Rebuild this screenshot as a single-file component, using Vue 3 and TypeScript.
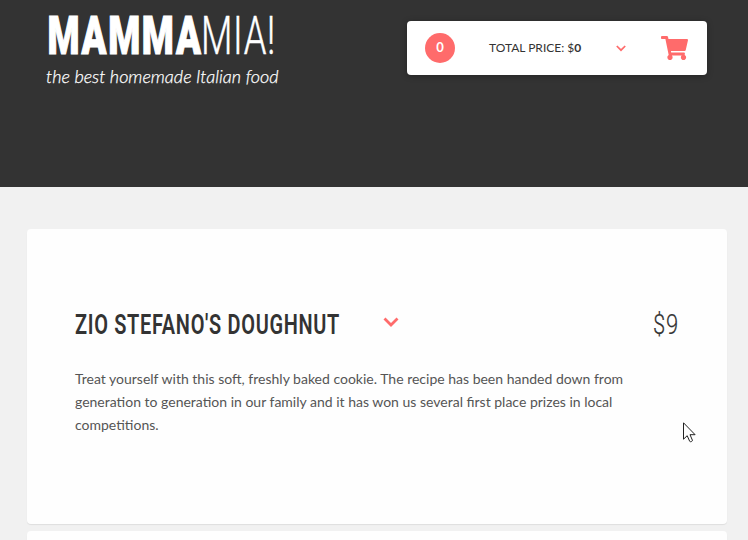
<script setup lang="ts">
import { ref } from 'vue'

interface Dish {
  name: string
  price: number
  description: string
}

const count = ref<number>(0)
const total = ref<number>(0)
const dish: Dish = {
  name: "ZIO STEFANO'S DOUGHNUT",
  price: 9,
  description:
    'Treat yourself with this soft, freshly baked cookie. The recipe has been handed down from generation to generation in our family and it has won us several first place prizes in local competitions.',
}
</script>

<template>
  <div class="page">
    <header class="header">
      <div class="brand">
        <svg class="logo" width="240" height="70" viewBox="0 0 240 70">
          <text class="logo-bold" x="1.500" y="53.500" textLength="155" lengthAdjust="spacingAndGlyphs">MAMMA</text>
          <text class="logo-thin" x="155" y="54" textLength="75" lengthAdjust="spacingAndGlyphs">MIA!</text>
        </svg>
        <p class="tagline">the best homemade Italian food</p>
      </div>
      <div class="cart">
        <span class="badge">{{ count }}</span>
        <span class="total">TOTAL PRICE: $<b>{{ total }}</b></span>
        <svg class="cart-chevron" width="10" height="7" viewBox="0 0 10 7">
          <path d="M.8 1 5 5.2 9.2 1" />
        </svg>
        <svg class="cart-icon" width="27" height="24" viewBox="0 0 576 512">
          <path
            d="M528.12 301.319l47.273-208C578.806 78.301 567.391 64 551.99 64H159.208l-9.166-44.81C147.758 8.021 137.93 0 126.529 0H24C10.745 0 0 10.745 0 24v16c0 13.255 10.745 24 24 24h69.883l70.248 343.435C147.325 417.1 136 435.222 136 456c0 30.928 25.072 56 56 56s56-25.072 56-56c0-15.674-6.447-29.835-16.824-40h209.647C430.447 426.165 424 440.326 424 456c0 30.928 25.072 56 56 56s56-25.072 56-56c0-22.172-12.888-41.332-31.579-50.405l5.517-24.276c3.413-15.018-8.002-29.319-23.403-29.319H218.117l-6.545-32h293.145c11.206 0 20.92-7.754 23.403-18.681z"
          />
        </svg>
      </div>
    </header>

    <main class="menu">
      <article class="card">
        <div class="card-head">
          <svg class="title" width="268" height="40" viewBox="0 0 268 40">
            <text x="0" y="30.500" textLength="265" lengthAdjust="spacingAndGlyphs">{{ dish.name }}</text>
          </svg>
          <svg class="chevron" width="16" height="10" viewBox="0 0 16 10">
            <path d="M1.500 1.500 8 8l6.500-6.500" />
          </svg>
          <svg class="price" width="26" height="40" viewBox="0 0 26 40">
            <text x="0" y="30.500" textLength="26" lengthAdjust="spacingAndGlyphs">${{ dish.price }}</text>
          </svg>
        </div>
        <p class="description">{{ dish.description }}</p>
      </article>
      <article class="card"></article>
    </main>

    <svg class="pointer" width="13" height="21" viewBox="0 0 13 21">
      <path d="M.5.8v16.400l3.700-3.500 2.500 5.600c.8 1 3 .1 2.700-1.100L7 12.700h5.100z" />
    </svg>
  </div>
</template>

<style>
body {
  margin: 0;
  overflow: hidden;
}
</style>

<style scoped>
.page {
  position: relative;
  height: 540px;
  overflow: hidden;
  background: #f1f1f1;
  color: #333;
  font-family: Lato, "Liberation Sans", sans-serif;
}
.header {
  box-sizing: border-box;
  height: 187px;
  padding: 0 41px 0 46px;
  display: flex;
  justify-content: space-between;
  align-items: flex-start;
  background: #333;
}
.logo,
.title,
.price {
  display: block;
  overflow: visible;
}
.logo text {
  fill: #fff;
  stroke: #fff;
  font-family: Roboto, sans-serif;
}
.logo .logo-bold {
  font-size: 53.5px;
  font-weight: 900;
  letter-spacing: 2.5px;
  stroke-width: 1.2;
}
.logo .logo-thin {
  font-size: 54.5px;
  font-weight: 300;
  letter-spacing: 1px;
  stroke-width: 0.5;
}
.tagline {
  margin: -6px 0 0;
  color: #fff;
  font-size: 18px;
  font-weight: 300;
  line-height: 24px;
  font-style: italic;
  white-space: nowrap;
  -webkit-text-stroke: 0.25px #fff;
}
.cart {
  box-sizing: border-box;
  width: 300px;
  height: 54px;
  margin-top: 21px;
  padding: 0 19px 0 18px;
  display: flex;
  align-items: center;
  border-radius: 4px;
  background: #fff;
  box-shadow: 0 1px 6px rgba(0, 0, 0, 0.3);
}
.badge {
  width: 30px;
  height: 30px;
  border-radius: 50%;
  background: #ff6b6b;
  color: #fff;
  font-size: 13px;
  font-weight: 700;
  line-height: 28px;
  text-align: center;
}
.total {
  width: 93px;
  margin-left: 34px;
  padding-bottom: 2px;
  font-size: 12px;
  white-space: nowrap;
}
.cart-chevron {
  margin-left: 34px;
}
.cart-chevron path,
.chevron path {
  fill: none;
  stroke: #ff6b6b;
  stroke-width: 1.7;
}
.cart-icon {
  margin-left: auto;
  fill: #ff6b6b;
}
.menu {
  padding: 42px 21px 0 27px;
  display: flex;
  flex-direction: column;
  gap: 7px;
}
.card {
  box-sizing: border-box;
  height: 295px;
  flex: none;
  padding: 74px 48px 0;
  border-radius: 4px;
  background: #fefefe;
  box-shadow: 0 1px 1px rgba(0, 0, 0, 0.08);
}
.card-head {
  display: flex;
  align-items: center;
  height: 40px;
}
.title text {
  fill: #333;
  font-family: Roboto, sans-serif;
  font-size: 28.5px;
  font-weight: 600;
  letter-spacing: 1px;
}
.chevron {
  margin-left: 40px;
  margin-bottom: 2px;
}
.chevron path {
  stroke-width: 2.8;
}
.price {
  margin-left: auto;
}
.price text {
  fill: #333;
  font-family: Roboto, sans-serif;
  font-size: 28px;
  font-weight: 300;
  letter-spacing: 1px;
  stroke: #333;
  stroke-width: 0.2;
}
.description {
  margin: 24px 0 0;
  width: 556px;
  color: #555;
  font-size: 14px;
  line-height: 23px;
}
.pointer {
  position: absolute;
  left: 683px;
  top: 422px;
}
.pointer path {
  fill: #fff;
  stroke: #222;
  stroke-width: 1;
}
</style>
